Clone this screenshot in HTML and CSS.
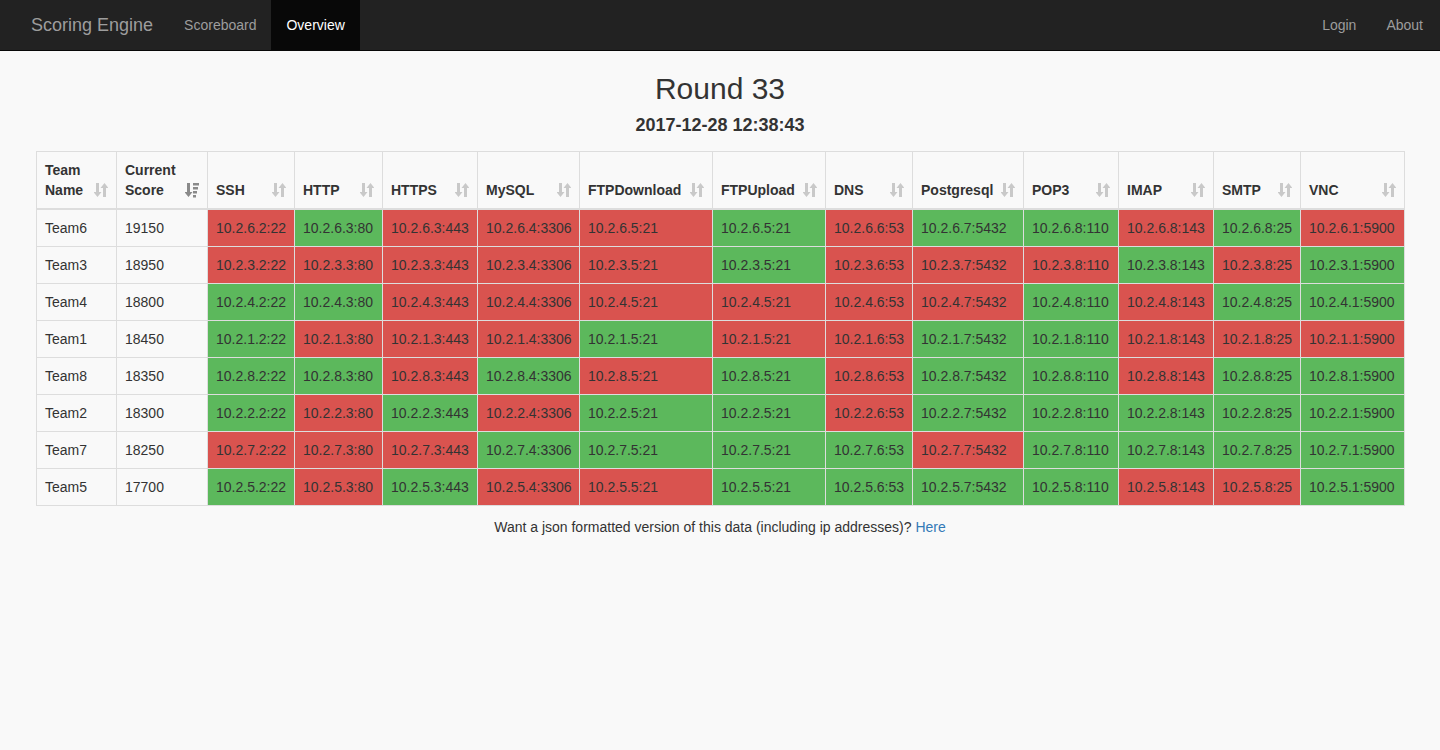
FILE: index.html
```html
<!DOCTYPE html>
<html>
<head>
<meta charset="utf-8">
<title>Scoring Engine - Overview</title>
<link rel="stylesheet" href="styles.css">
</head>
<body>
<nav class="navbar">
  <div class="nav-left">
    <a class="brand" href="#">Scoring Engine</a>
    <a class="nav-link" href="#">Scoreboard</a>
    <a class="nav-link active" href="#">Overview</a>
  </div>
  <div class="nav-right">
    <a class="nav-link" href="#">Login</a>
    <a class="nav-link" href="#">About</a>
  </div>
</nav>
<main class="content">
  <h2 class="round">Round 33</h2>
  <h4 class="timestamp">2017-12-28 12:38:43</h4>
  <table class="overview">
    <colgroup>
      <col class="w80"><col class="w91"><col class="w87"><col class="w88"><col class="w95"><col class="w102"><col class="w133"><col class="w113"><col class="w87"><col class="w111"><col class="w95"><col class="w95"><col class="w87"><col class="w104">
    </colgroup>
    <thead>
      <tr>
        <th><div class="th"><span>Team<br>Name</span><svg class="sort" viewBox="0 0 14 16"><path d="M2 1h3v9h2.5L3.5 15 -0.5 10H2z"/><path d="M9 15h3V6h2.5L10.5 1 6.5 6H9z"/></svg></div></th>
        <th><div class="th"><span>Current<br>Score</span><svg class="sort sorted" viewBox="0 0 14 16"><path d="M2 1h3v9h2.5L3.5 15 -0.5 10H2z"/><path d="M8 1h6v2.5H8zM8 5h5v2.5H8zM8 9h4v2.5H8zM8 13h3v2.5H8z"/></svg></div></th>
        <th><div class="th"><span>SSH</span><svg class="sort" viewBox="0 0 14 16"><path d="M2 1h3v9h2.5L3.5 15 -0.5 10H2z"/><path d="M9 15h3V6h2.5L10.5 1 6.5 6H9z"/></svg></div></th>
        <th><div class="th"><span>HTTP</span><svg class="sort" viewBox="0 0 14 16"><path d="M2 1h3v9h2.5L3.5 15 -0.5 10H2z"/><path d="M9 15h3V6h2.5L10.5 1 6.5 6H9z"/></svg></div></th>
        <th><div class="th"><span>HTTPS</span><svg class="sort" viewBox="0 0 14 16"><path d="M2 1h3v9h2.5L3.5 15 -0.5 10H2z"/><path d="M9 15h3V6h2.5L10.5 1 6.5 6H9z"/></svg></div></th>
        <th><div class="th"><span>MySQL</span><svg class="sort" viewBox="0 0 14 16"><path d="M2 1h3v9h2.5L3.5 15 -0.5 10H2z"/><path d="M9 15h3V6h2.5L10.5 1 6.5 6H9z"/></svg></div></th>
        <th><div class="th"><span>FTPDownload</span><svg class="sort" viewBox="0 0 14 16"><path d="M2 1h3v9h2.5L3.5 15 -0.5 10H2z"/><path d="M9 15h3V6h2.5L10.5 1 6.5 6H9z"/></svg></div></th>
        <th><div class="th"><span>FTPUpload</span><svg class="sort" viewBox="0 0 14 16"><path d="M2 1h3v9h2.5L3.5 15 -0.5 10H2z"/><path d="M9 15h3V6h2.5L10.5 1 6.5 6H9z"/></svg></div></th>
        <th><div class="th"><span>DNS</span><svg class="sort" viewBox="0 0 14 16"><path d="M2 1h3v9h2.5L3.5 15 -0.5 10H2z"/><path d="M9 15h3V6h2.5L10.5 1 6.5 6H9z"/></svg></div></th>
        <th><div class="th"><span>Postgresql</span><svg class="sort" viewBox="0 0 14 16"><path d="M2 1h3v9h2.5L3.5 15 -0.5 10H2z"/><path d="M9 15h3V6h2.5L10.5 1 6.5 6H9z"/></svg></div></th>
        <th><div class="th"><span>POP3</span><svg class="sort" viewBox="0 0 14 16"><path d="M2 1h3v9h2.5L3.5 15 -0.5 10H2z"/><path d="M9 15h3V6h2.5L10.5 1 6.5 6H9z"/></svg></div></th>
        <th><div class="th"><span>IMAP</span><svg class="sort" viewBox="0 0 14 16"><path d="M2 1h3v9h2.5L3.5 15 -0.5 10H2z"/><path d="M9 15h3V6h2.5L10.5 1 6.5 6H9z"/></svg></div></th>
        <th><div class="th"><span>SMTP</span><svg class="sort" viewBox="0 0 14 16"><path d="M2 1h3v9h2.5L3.5 15 -0.5 10H2z"/><path d="M9 15h3V6h2.5L10.5 1 6.5 6H9z"/></svg></div></th>
        <th><div class="th"><span>VNC</span><svg class="sort" viewBox="0 0 14 16"><path d="M2 1h3v9h2.5L3.5 15 -0.5 10H2z"/><path d="M9 15h3V6h2.5L10.5 1 6.5 6H9z"/></svg></div></th>
      </tr>
    </thead>
    <tbody>
      <tr><td>Team6</td><td>19150</td>
        <td class="down">10.2.6.2:22</td><td class="up">10.2.6.3:80</td><td class="down">10.2.6.3:443</td><td class="down">10.2.6.4:3306</td><td class="down">10.2.6.5:21</td><td class="up">10.2.6.5:21</td><td class="down">10.2.6.6:53</td><td class="up">10.2.6.7:5432</td><td class="up">10.2.6.8:110</td><td class="down">10.2.6.8:143</td><td class="up">10.2.6.8:25</td><td class="down">10.2.6.1:5900</td></tr>
      <tr><td>Team3</td><td>18950</td>
        <td class="down">10.2.3.2:22</td><td class="down">10.2.3.3:80</td><td class="down">10.2.3.3:443</td><td class="down">10.2.3.4:3306</td><td class="down">10.2.3.5:21</td><td class="up">10.2.3.5:21</td><td class="down">10.2.3.6:53</td><td class="down">10.2.3.7:5432</td><td class="down">10.2.3.8:110</td><td class="up">10.2.3.8:143</td><td class="down">10.2.3.8:25</td><td class="up">10.2.3.1:5900</td></tr>
      <tr><td>Team4</td><td>18800</td>
        <td class="up">10.2.4.2:22</td><td class="up">10.2.4.3:80</td><td class="down">10.2.4.3:443</td><td class="down">10.2.4.4:3306</td><td class="down">10.2.4.5:21</td><td class="down">10.2.4.5:21</td><td class="down">10.2.4.6:53</td><td class="down">10.2.4.7:5432</td><td class="up">10.2.4.8:110</td><td class="down">10.2.4.8:143</td><td class="up">10.2.4.8:25</td><td class="up">10.2.4.1:5900</td></tr>
      <tr><td>Team1</td><td>18450</td>
        <td class="up">10.2.1.2:22</td><td class="down">10.2.1.3:80</td><td class="down">10.2.1.3:443</td><td class="down">10.2.1.4:3306</td><td class="up">10.2.1.5:21</td><td class="down">10.2.1.5:21</td><td class="down">10.2.1.6:53</td><td class="up">10.2.1.7:5432</td><td class="up">10.2.1.8:110</td><td class="down">10.2.1.8:143</td><td class="down">10.2.1.8:25</td><td class="down">10.2.1.1:5900</td></tr>
      <tr><td>Team8</td><td>18350</td>
        <td class="up">10.2.8.2:22</td><td class="up">10.2.8.3:80</td><td class="down">10.2.8.3:443</td><td class="up">10.2.8.4:3306</td><td class="down">10.2.8.5:21</td><td class="up">10.2.8.5:21</td><td class="down">10.2.8.6:53</td><td class="up">10.2.8.7:5432</td><td class="up">10.2.8.8:110</td><td class="down">10.2.8.8:143</td><td class="up">10.2.8.8:25</td><td class="up">10.2.8.1:5900</td></tr>
      <tr><td>Team2</td><td>18300</td>
        <td class="up">10.2.2.2:22</td><td class="down">10.2.2.3:80</td><td class="up">10.2.2.3:443</td><td class="down">10.2.2.4:3306</td><td class="up">10.2.2.5:21</td><td class="up">10.2.2.5:21</td><td class="down">10.2.2.6:53</td><td class="up">10.2.2.7:5432</td><td class="up">10.2.2.8:110</td><td class="up">10.2.2.8:143</td><td class="up">10.2.2.8:25</td><td class="up">10.2.2.1:5900</td></tr>
      <tr><td>Team7</td><td>18250</td>
        <td class="down">10.2.7.2:22</td><td class="down">10.2.7.3:80</td><td class="down">10.2.7.3:443</td><td class="up">10.2.7.4:3306</td><td class="up">10.2.7.5:21</td><td class="up">10.2.7.5:21</td><td class="up">10.2.7.6:53</td><td class="down">10.2.7.7:5432</td><td class="up">10.2.7.8:110</td><td class="up">10.2.7.8:143</td><td class="up">10.2.7.8:25</td><td class="up">10.2.7.1:5900</td></tr>
      <tr><td>Team5</td><td>17700</td>
        <td class="up">10.2.5.2:22</td><td class="down">10.2.5.3:80</td><td class="up">10.2.5.3:443</td><td class="down">10.2.5.4:3306</td><td class="down">10.2.5.5:21</td><td class="up">10.2.5.5:21</td><td class="up">10.2.5.6:53</td><td class="up">10.2.5.7:5432</td><td class="up">10.2.5.8:110</td><td class="down">10.2.5.8:143</td><td class="down">10.2.5.8:25</td><td class="up">10.2.5.1:5900</td></tr>
    </tbody>
  </table>
  <p class="json-note">Want a json formatted version of this data (including ip addresses)? <a href="#">Here</a></p>
</main>
</body>
</html>
```

FILE: styles.css
```css
* { box-sizing: border-box; }
html, body { margin: 0; padding: 0; }
body {
  font-family: "Liberation Sans", Arial, Helvetica, sans-serif;
  font-size: 14px;
  line-height: 20px;
  color: #333;
  background: #f9f9f9;
  min-height: 750px;
}
a { text-decoration: none; }

.navbar {
  display: flex;
  justify-content: space-between;
  height: 51px;
  background: #222;
  border-bottom: 1px solid #080808;
  padding: 0 2px 0 16px;
}
.nav-left, .nav-right { display: flex; }
.brand {
  display: block;
  padding: 15px 16px 15px 15px;
  font-size: 18px;
  line-height: 20px;
  color: #9d9d9d;
  height: 50px;
}
.nav-link {
  display: block;
  padding: 15px;
  line-height: 20px;
  height: 50px;
  color: #9d9d9d;
}
.nav-link.active {
  color: #fff;
  background: #080808;
}

.content {
  padding: 0 36px;
}
.round {
  margin: 21px 0 10px;
  font-size: 30px;
  line-height: 33px;
  font-weight: normal;
  text-align: center;
}
.timestamp {
  margin: 10px 0 16px;
  font-size: 18px;
  line-height: 20px;
  font-weight: bold;
  text-align: center;
}

.overview {
  width: 100%;
  table-layout: fixed;
  border-collapse: collapse;
  border: 1px solid #ddd;
}
.w80 { width: 80px; }
.w87 { width: 87px; }
.w88 { width: 88px; }
.w91 { width: 91px; }
.w95 { width: 95px; }
.w102 { width: 102px; }
.w104 { width: 104px; }
.w111 { width: 111px; }
.w113 { width: 113px; }
.w133 { width: 133px; }

.overview th, .overview td {
  border: 1px solid #ddd;
  padding: 8px;
  line-height: 20px;
  text-align: left;
  white-space: nowrap;
  overflow: hidden;
}
.overview th {
  vertical-align: bottom;
  border-bottom-width: 2px;
  font-weight: bold;
}
.th {
  display: flex;
  justify-content: space-between;
  align-items: flex-end;
}
.sort {
  width: 14px;
  height: 16px;
  margin-bottom: 2px;
  fill: #c9c9c9;
  flex: none;
}
.sort.sorted { fill: #8a8a8a; }

.overview td.up { background: #5cb85c; }
.overview td.down { background: #d9534f; }

.json-note {
  margin: 11px 0 0;
  text-align: center;
}
.json-note a { color: #337ab7; }
```
